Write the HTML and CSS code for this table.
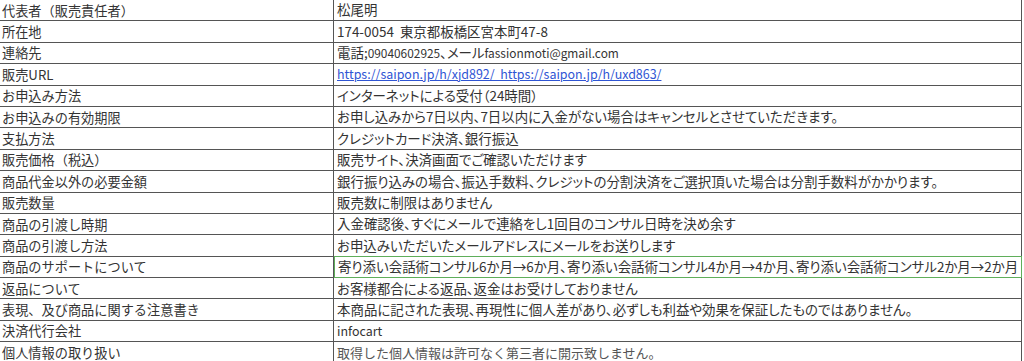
FILE: index.html
```html
<!DOCTYPE html>
<html lang="ja">
<head>
<meta charset="utf-8">
<title>特定商取引法に基づく表記</title>
<link rel="stylesheet" href="styles.css">
</head>
<body>
<div class="sheet">
  <div class="row"><div class="key">代表者（販売責任者）</div><div class="val">松尾明</div></div>
  <div class="row"><div class="key">所在地</div><div class="val">174-0054&nbsp;&nbsp;東京都板橋区宮本町47-8</div></div>
  <div class="row"><div class="key">連絡先</div><div class="val">電話;<span class="lat tight">09040602925</span>、メール<span class="lat tight">fassionmoti@gmail.com</span></div></div>
  <div class="row"><div class="key">販売URL</div><div class="val"><span class="link lat">https://saipon.jp/h/xjd892/&nbsp;&nbsp;https://saipon.jp/h/uxd863/</span></div></div>
  <div class="row"><div class="key">お申込み方法</div><div class="val">インターネットによる受付（24時間）</div></div>
  <div class="row"><div class="key">お申込みの有効期限</div><div class="val">お申し込みから7日以内、7日以内に入金がない場合はキャンセルとさせていただきます。</div></div>
  <div class="row"><div class="key">支払方法</div><div class="val">クレジットカード決済、銀行振込</div></div>
  <div class="row"><div class="key">販売価格（税込）</div><div class="val">販売サイト、決済画面でご確認いただけます</div></div>
  <div class="row"><div class="key">商品代金以外の必要金額</div><div class="val">銀行振り込みの場合、振込手数料、クレジットの分割決済をご選択頂いた場合は分割手数料がかかります。</div></div>
  <div class="row"><div class="key">販売数量</div><div class="val">販売数に制限はありません</div></div>
  <div class="row"><div class="key">商品の引渡し時期</div><div class="val">入金確認後、すぐにメールで連絡をし1回目のコンサル日時を決め余す</div></div>
  <div class="row"><div class="key">商品の引渡し方法</div><div class="val">お申込みいただいたメールアドレスにメールをお送りします</div></div>
  <div class="row"><div class="key">商品のサポートについて</div><div class="val selected">寄り添い会話術コンサル6か月→6か月、寄り添い会話術コンサル4か月→4か月、寄り添い会話術コンサル2か月→2か月</div></div>
  <div class="row"><div class="key">返品について</div><div class="val">お客様都合による返品、返金はお受けしておりません</div></div>
  <div class="row"><div class="key">表現、及び商品に関する注意書き</div><div class="val">本商品に記された表現、再現性に個人差があり、必ずしも利益や効果を保証したものではありません。</div></div>
  <div class="row"><div class="key">決済代行会社</div><div class="val"><span class="lat">infocart</span></div></div>
  <div class="row"><div class="key">個人情報の取り扱い</div><div class="val mono">取得した個人情報は許可なく第三者に開示致しません。</div></div>
</div>
</body>
</html>
```
FILE: styles.css
```css
html, body {
  margin: 0;
  padding: 0;
  background: #ffffff;
}
body {
  font-family: "Noto Sans CJK JP", "Noto Sans", sans-serif;
  font-size: 13.2px;
  color: #333333;
  overflow: hidden;
}
.sheet {
  width: 1022px;
  display: grid;
  grid-template-columns: 334px 688px;
  grid-auto-rows: 21.4px;
}
.row {
  display: contents;
}
.key, .val {
  box-sizing: border-box;
  border-bottom: 1px solid #555555;
  border-right: 1px solid #555555;
  display: flex;
  align-items: center;
  white-space: nowrap;
  overflow: hidden;
  line-height: 1;
}
.key {
  padding-left: 2px;
}
.val {
  padding-left: 3px;
  font-size: 13.45px;
  font-feature-settings: "palt";
}
.lat {
  font-size: 12.45px;
}
.lat.tight {
  font-size: 11.9px;
}
.val.mono {
  font-size: 13px;
  font-feature-settings: normal;
  color: #555555;
}
.link {
  color: #2f55d4;
  text-decoration: underline;
}
.selected {
  position: relative;
  border: 1px solid #5fae5a;
  margin-top: -1px;
}
```
